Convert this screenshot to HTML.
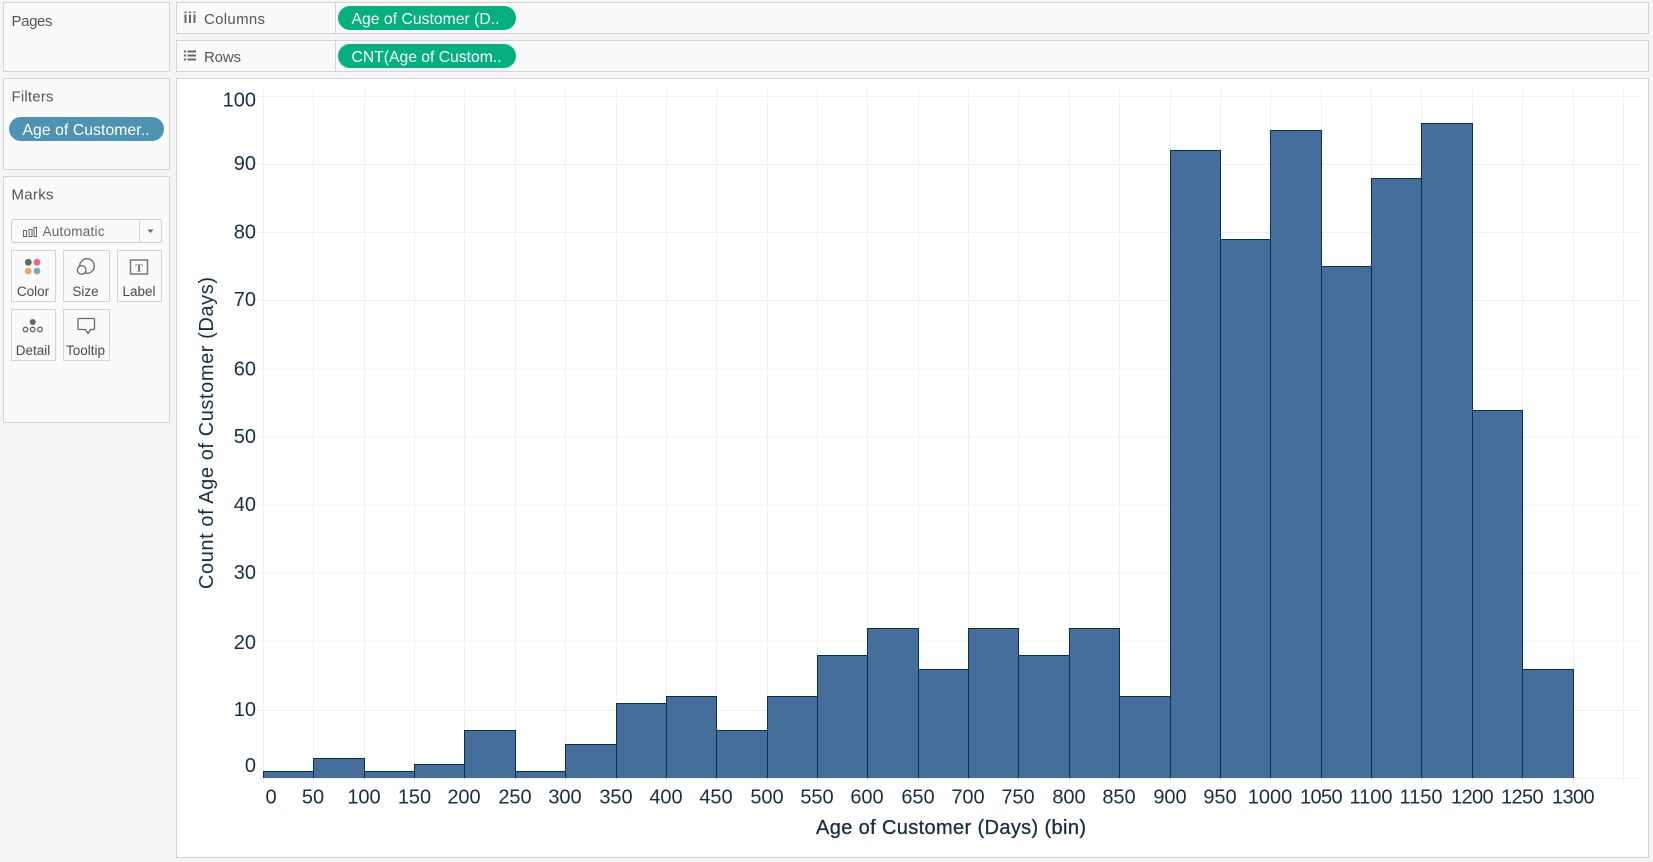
<!DOCTYPE html>
<html><head><meta charset="utf-8"><style>
html,body{margin:0;padding:0;background:#f5f5f5;width:1653px;height:862px;overflow:hidden}
svg{display:block}
text{font-family:"Liberation Sans",sans-serif}
.p{fill:#fafafa;stroke:#d4d4d4;stroke-width:1}
.h{font-size:15px;fill:#555}
.w{font-size:15.7px;fill:#fff}
.m{font-size:13.5px;fill:#4a4a4a}
.b{fill:#fafafa;stroke:#d4d4d4}
.a{font-size:20px;fill:#17303f}
.e{text-anchor:end}
.c{text-anchor:middle}
.t{letter-spacing:-.6px}
.ic{fill:none;stroke:#666;stroke-width:1.3}
.bar{fill:#466e9c;stroke:#06324a;stroke-width:1}
.g{stroke:#f0f0f0;stroke-width:1;fill:none}
</style></head><body>
<svg width="1653" height="862" viewBox="0 0 1653 862" xmlns="http://www.w3.org/2000/svg">
<rect width="1653" height="862" fill="#f5f5f5"/>
<rect class="p" x="3.5" y="2.5" width="166" height="69"/>
<text class="h" x="11.5" y="26" textLength="41">Pages</text>
<rect class="p" x="176.5" y="2.5" width="1472" height="31"/>
<rect class="p" x="176.5" y="40.5" width="1472" height="31"/>
<path d="M335.5 3V33M335.5 41V71" stroke="#d4d4d4" fill="none"/>
<path d="M185.5 14.500V23M190 14.500V23M194.500 14.500V23" stroke="#666" stroke-width="2" fill="none"/>
<path d="M185.500 11.500v1.500M190 11.500v1.500M194.500 11.500v1.500" stroke="#666" stroke-width="2" fill="none"/>
<path d="M187.500 51.500H196M187.500 55.500H196M187.500 59.500H196M184 51.500H186M184 55.500H186M184 59.500H186" stroke="#666" stroke-width="2" fill="none"/>
<text class="h" x="204" y="24" textLength="61">Columns</text>
<text class="h" x="204" y="62" textLength="37">Rows</text>
<rect x="338" y="6" width="178" height="24" rx="12" fill="#05b07f"/>
<rect x="338" y="44" width="178" height="24" rx="12" fill="#05b07f"/>
<text class="w" x="351.500" y="24" textLength="148">Age of Customer (D..</text>
<text class="w" x="351.500" y="62" textLength="150">CNT(Age of Custom..</text>

<rect class="p" x="3.5" y="78.500" width="166" height="91"/>
<text class="h" x="11.500" y="101.500" textLength="42">Filters</text>
<rect x="9" y="117" width="155" height="24" rx="12" fill="#4e93b1"/>
<text class="w" x="22.500" y="135" textLength="127">Age of Customer..</text>

<rect class="p" x="3.5" y="176.500" width="166" height="246"/>
<text class="h" x="11.500" y="199.500" textLength="42">Marks</text>
<rect x="11.500" y="219.500" width="150" height="23" rx="2" fill="#fafafa" stroke="#cfcfcf"/>
<path d="M139.500 220V242" stroke="#d4d4d4"/>
<path d="M147.500 229.500H153.500L150.500 233Z" fill="#666"/>
<path d="M23.500 230.500h3v6h-3zM29 229.500h3v7h-3zM34 227.500h2.500v9H34z" fill="none" stroke="#666"/>
<text x="42.500" y="236" font-size="13.500" fill="#666" textLength="62">Automatic</text>

<rect class="b" x="11.500" y="250.500" width="44" height="51"/>
<rect class="b" x="63.500" y="250.500" width="46" height="51"/>
<rect class="b" x="117.500" y="250.500" width="44" height="51"/>
<rect class="b" x="11.500" y="309.500" width="44" height="51"/>
<rect class="b" x="63.500" y="309.500" width="46" height="51"/>
<circle cx="28.300" cy="262.300" r="3.400" fill="#66666c"/>
<circle cx="37" cy="262.300" r="3.400" fill="#ef6a75"/>
<circle cx="28.300" cy="271" r="3.400" fill="#eba85f"/>
<circle cx="37" cy="271" r="3.400" fill="#7fa9b8"/>
<circle class="ic" cx="87" cy="266" r="7.300"/>
<circle cx="81.700" cy="270" r="4.300" fill="#fafafa" stroke="#666" stroke-width="1.300"/>
<rect x="130.500" y="260" width="17" height="14" fill="none" stroke="#777" stroke-width="1.500"/>
<text x="139" y="271.500" text-anchor="middle" font-size="11" font-weight="bold" fill="#666" style="font-family:'Liberation Serif',serif">T</text>
<circle cx="32.700" cy="322" r="3" fill="#666"/>
<circle class="ic" cx="25.500" cy="329.500" r="2.300"/>
<circle class="ic" cx="32.700" cy="329.500" r="2.300"/>
<circle class="ic" cx="40" cy="329.500" r="2.300"/>
<path class="ic" d="M79 318.500H93.500a1 1 0 0 1 1 1V328.500a1 1 0 0 1-1 1H90.500L88 333.500L85.500 329.500H79a1 1 0 0 1-1-1V319.500a1 1 0 0 1 1-1Z"/>
<text class="m" x="33" y="296" text-anchor="middle">Color</text>
<text class="m" x="85.500" y="296" text-anchor="middle">Size</text>
<text class="m" x="139" y="296" text-anchor="middle">Label</text>
<text class="m" x="33" y="355" text-anchor="middle">Detail</text>
<text class="m" x="85.500" y="355" text-anchor="middle">Tooltip</text>

<rect x="176.500" y="78.500" width="1472" height="779" fill="#fff" stroke="#d4d4d4"/>
<path class="g" d="M257 96.500H1639M257 164.500H1639M257 232.500H1639M257 300.500H1639M257 369H1639M257 437H1639M257 505H1639M257 573H1639M257 641H1639M257 710.500H1639M257 778.500H1639"/>
<path class="g" d="M263.500 89V783M313.500 89V783M364.500 89V783M414.500 89V783M464.500 89V783M515.500 89V783M565.500 89V783M616.500 89V783M666.500 89V783M716.500 89V783M767.500 89V783M817.500 89V783M867.500 89V783M918.500 89V783M968.500 89V783M1018.500 89V783M1069.500 89V783M1119.500 89V783M1170.500 89V783M1220.500 89V783M1270.500 89V783M1321.500 89V783M1371.500 89V783M1421.500 89V783M1472.500 89V783M1522.500 89V783M1573.500 89V783M1623.500 89V783"/>

<path class="bar" d="M263.500 778V771.500H313.500V778"/>
<path class="bar" d="M313.500 778V758.500H364.500V778"/>
<path class="bar" d="M364.500 778V771.500H414.500V778"/>
<path class="bar" d="M414.500 778V764.500H464.500V778"/>
<path class="bar" d="M464.500 778V730.500H515.500V778"/>
<path class="bar" d="M515.500 778V771.500H565.500V778"/>
<path class="bar" d="M565.500 778V744.500H616.500V778"/>
<path class="bar" d="M616.500 778V703.500H666.500V778"/>
<path class="bar" d="M666.500 778V696.500H716.500V778"/>
<path class="bar" d="M716.500 778V730.500H767.500V778"/>
<path class="bar" d="M767.500 778V696.500H817.500V778"/>
<path class="bar" d="M817.500 778V655.500H867.500V778"/>
<path class="bar" d="M867.500 778V628.500H918.500V778"/>
<path class="bar" d="M918.500 778V669.500H968.500V778"/>
<path class="bar" d="M968.500 778V628.500H1018.500V778"/>
<path class="bar" d="M1018.500 778V655.500H1069.500V778"/>
<path class="bar" d="M1069.500 778V628.500H1119.500V778"/>
<path class="bar" d="M1119.500 778V696.500H1170.500V778"/>
<path class="bar" d="M1170.500 778V150.500H1220.500V778"/>
<path class="bar" d="M1220.500 778V239.500H1270.500V778"/>
<path class="bar" d="M1270.500 778V130.500H1321.500V778"/>
<path class="bar" d="M1321.500 778V266.500H1371.500V778"/>
<path class="bar" d="M1371.500 778V178.500H1421.500V778"/>
<path class="bar" d="M1421.500 778V123.500H1472.500V778"/>
<path class="bar" d="M1472.500 778V410.500H1522.500V778"/>
<path class="bar" d="M1522.500 778V669.500H1573.500V778"/>

<text class="a e" x="256" y="106.500">100</text>
<text class="a e" x="256" y="170">90</text>
<text class="a e" x="256" y="238.500">80</text>
<text class="a e" x="256" y="306">70</text>
<text class="a e" x="256" y="375.500">60</text>
<text class="a e" x="256" y="443">50</text>
<text class="a e" x="256" y="511">40</text>
<text class="a e" x="256" y="579">30</text>
<text class="a e" x="256" y="649">20</text>
<text class="a e" x="256" y="716">10</text>
<text class="a e" x="256" y="772">0</text>

<text class="a c" x="271" y="803.500">0</text>
<text class="a c" x="313" y="803.500">50</text>
<text class="a c" x="364" y="803.500">100</text>
<text class="a c" x="414.500" y="803.500">150</text>
<text class="a c" x="464" y="803.500">200</text>
<text class="a c" x="515" y="803.500">250</text>
<text class="a c" x="565" y="803.500">300</text>
<text class="a c" x="616" y="803.500">350</text>
<text class="a c" x="666" y="803.500">400</text>
<text class="a c" x="716" y="803.500">450</text>
<text class="a c" x="767" y="803.500">500</text>
<text class="a c" x="817" y="803.500">550</text>
<text class="a c" x="867" y="803.500">600</text>
<text class="a c" x="918" y="803.500">650</text>
<text class="a c" x="968" y="803.500">700</text>
<text class="a c" x="1018" y="803.500">750</text>
<text class="a c" x="1069" y="803.500">800</text>
<text class="a c" x="1119" y="803.500">850</text>
<text class="a c" x="1170" y="803.500">900</text>
<text class="a c" x="1220" y="803.500">950</text>
<text class="a c" x="1270" y="803.500">1000</text>
<text class="a c t" x="1321" y="803.500">1050</text>
<text class="a c" x="1371" y="803.500">1100</text>
<text class="a c" x="1421" y="803.500">1150</text>
<text class="a c t" x="1472" y="803.500">1200</text>
<text class="a c t" x="1522" y="803.500">1250</text>
<text class="a c t" x="1573" y="803.500">1300</text>

<text class="a" x="816" y="834" textLength="270" style="stroke:#17303f;stroke-width:.3">Age of Customer (Days) (bin)</text>
<text class="a" transform="translate(213 589) rotate(-90)" textLength="312">Count of Age of Customer (Days)</text>
</svg>
</body></html>
